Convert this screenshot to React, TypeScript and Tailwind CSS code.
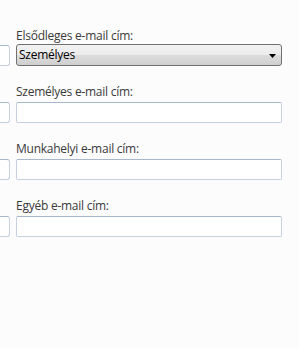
function TextBox() {
  return (
    <div className="h-[21px] rounded-[2px] border border-[#c5d0e0] border-t-[#a9b7cc] bg-white" />
  );
}

function Field({ label, first }: { label: string; first?: boolean }) {
  return (
    <div className="flex flex-col">
      <div className={`${first ? 'h-[16px] leading-[16px]' : 'h-[17px] leading-[14px]'} text-[12px] tracking-[-0.25px] text-[#3a3a3a]`}>{label}</div>
      {first ? (
        <div className="flex h-[22px] items-center justify-between rounded-[3px] border border-[#707070] bg-[linear-gradient(#f2f2f2_0%,#ebebeb_50%,#dddddd_50%,#cfcfcf_100%)] pl-[2px] pr-[5px]">
          <span className="text-[12px] leading-[16px] tracking-[-0.25px] text-black">Személyes</span>
          <svg width="7" height="4" viewBox="0 0 7 4" className="mt-[1px]">
            <path d="M0 0h7L3.5 4z" fill="#000" />
          </svg>
        </div>
      ) : (
        <TextBox />
      )}
    </div>
  );
}

function LeftBox() {
  return (
    <div className="ml-[-190px] h-[21px] w-[200px] rounded-[3px] border border-[#c5d0e0] border-t-[#a9b7cc] bg-white" />
  );
}

export default function App() {
  const fields = ['Személyes e-mail cím:', 'Munkahelyi e-mail cím:', 'Egyéb e-mail cím:'];
  return (
    <div className="h-[348px] w-[299px] overflow-hidden bg-[#fcfcfc] font-['Open_Sans',sans-serif]">
      <div className="flex pt-[28px]">
        {/* cut-off column on the left */}
        <div className="w-[10px] shrink-0 overflow-hidden">
          <div className="flex flex-col">
            <div className="mt-[17px]"><LeftBox /></div>
            <div className="mt-[36px]"><LeftBox /></div>
            <div className="mt-[36px]"><LeftBox /></div>
            <div className="mt-[36px]"><LeftBox /></div>
          </div>
        </div>
        <div className="ml-[6px] flex w-[266px] flex-col gap-[19px]">
          <Field label="Elsődleges e-mail cím:" first />
          {fields.map(f => <Field key={f} label={f} />)}
        </div>
      </div>
    </div>
  );
}
